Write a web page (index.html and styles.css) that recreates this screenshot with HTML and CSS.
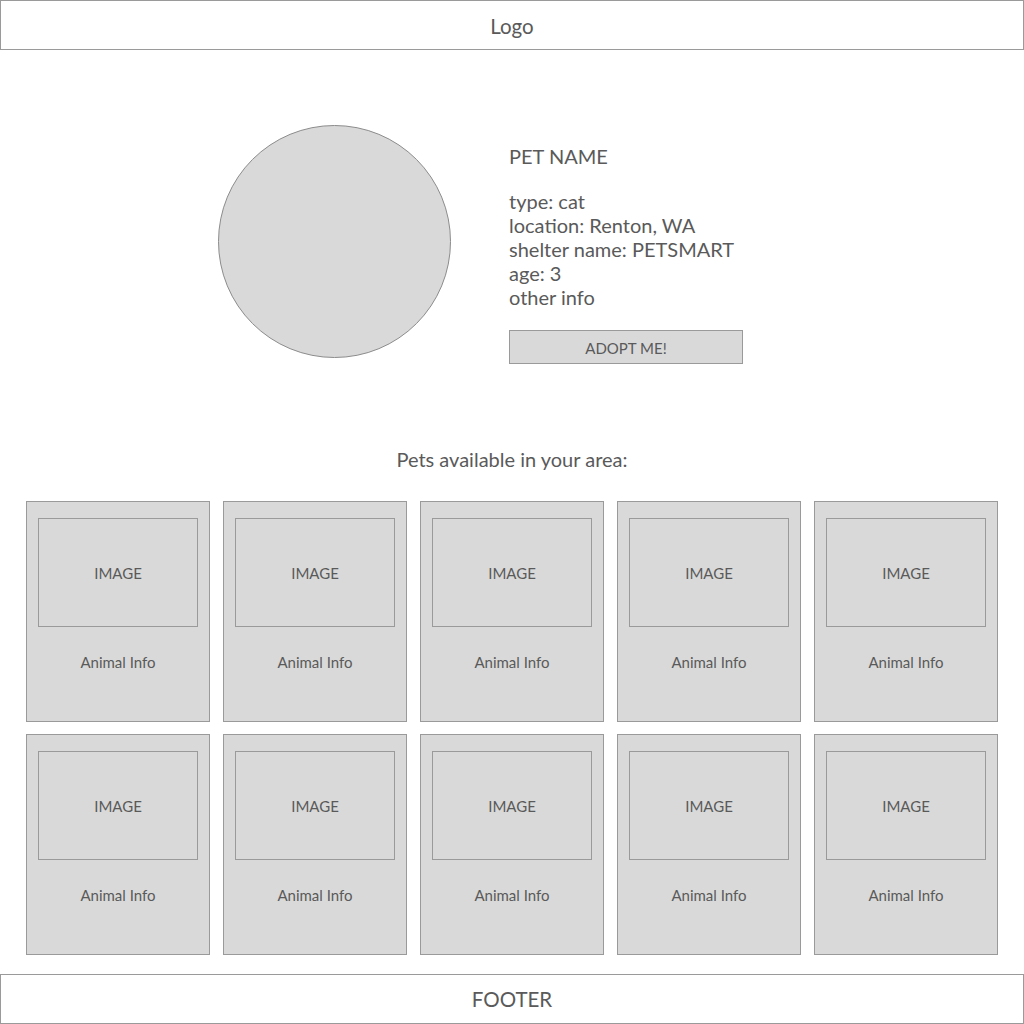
FILE: index.html
```html
<!DOCTYPE html>
<html lang="en">
<head>
    <meta charset="UTF-8">
    <meta name="viewport" content="width=device-width, initial-scale=1.0">
    <title>Pet Adoption</title>
    <link rel="stylesheet" href="styles.css">
</head>
<body>

    <!-- Header -->
    <header class="header">Logo</header>

    <!-- Pet utama -->
    <section class="hero">
        <div class="pet-photo"></div>
        <div class="pet-info">
            <div class="pet-name">PET NAME</div>
            <div class="pet-details">
                <div>type: cat</div>
                <div>location: Renton, WA</div>
                <div>shelter name: PETSMART</div>
                <div>age: 3</div>
                <div>other info</div>
            </div>
            <button class="adopt-btn">ADOPT ME!</button>
        </div>
    </section>

    <!-- Daftar pet -->
    <section class="nearby">
        <div class="nearby-title">Pets available in your area:</div>
        <div class="pet-grid">
            <div class="pet-card"><div class="card-image">IMAGE</div><div class="card-info">Animal Info</div></div>
            <div class="pet-card"><div class="card-image">IMAGE</div><div class="card-info">Animal Info</div></div>
            <div class="pet-card"><div class="card-image">IMAGE</div><div class="card-info">Animal Info</div></div>
            <div class="pet-card"><div class="card-image">IMAGE</div><div class="card-info">Animal Info</div></div>
            <div class="pet-card"><div class="card-image">IMAGE</div><div class="card-info">Animal Info</div></div>
            <div class="pet-card"><div class="card-image">IMAGE</div><div class="card-info">Animal Info</div></div>
            <div class="pet-card"><div class="card-image">IMAGE</div><div class="card-info">Animal Info</div></div>
            <div class="pet-card"><div class="card-image">IMAGE</div><div class="card-info">Animal Info</div></div>
            <div class="pet-card"><div class="card-image">IMAGE</div><div class="card-info">Animal Info</div></div>
            <div class="pet-card"><div class="card-image">IMAGE</div><div class="card-info">Animal Info</div></div>
        </div>
    </section>

    <!-- Footer -->
    <footer class="footer">FOOTER</footer>

</body>
</html>
```

FILE: styles.css
```css
* {
    box-sizing: border-box;
}

body {
    margin: 0;
    font-family: Lato, "Open Sans", sans-serif;
    color: #5a5a5a;
    background: #ffffff;
}

/* Header & footer */
.header,
.footer {
    height: 50px;
    border: 1px solid #9a9a9a;
    display: flex;
    align-items: center;
    justify-content: center;
    font-size: 20.5px;
}

.header {
    padding-top: 1px;
}

/* Pet utama */
.hero {
    display: flex;
    align-items: flex-start;
    gap: 58px;
    padding: 75px 0 0 218px;
}

.pet-photo {
    width: 233px;
    height: 233px;
    border-radius: 50%;
    background: #d9d9d9;
    border: 1px solid #8c8c8c;
}

.pet-info {
    padding-top: 19px;
    font-size: 20px;
    line-height: 24px;
}

.pet-name {
    margin-bottom: 21px;
}

.adopt-btn {
    display: block;
    width: 234px;
    height: 34px;
    margin-top: 21px;
    background: #d9d9d9;
    border: 1px solid #9a9a9a;
    font-family: inherit;
    font-size: 15px;
    color: #5a5a5a;
    padding: 2px 0 0;
}

/* Daftar pet */
.nearby {
    padding: 84px 26px 0;
}

.nearby-title {
    text-align: center;
    font-size: 20px;
    line-height: 22px;
    margin-bottom: 31px;
}

.pet-grid {
    display: grid;
    grid-template-columns: repeat(5, 184px);
    column-gap: 13px;
    row-gap: 12px;
    margin-bottom: 19px;
}

.pet-card {
    height: 221px;
    background: #d9d9d9;
    border: 1px solid #9a9a9a;
    padding: 16px 11px 0;
    font-size: 15px;
}

.card-image {
    height: 109px;
    border: 1px solid #9a9a9a;
    display: flex;
    align-items: center;
    justify-content: center;
}

.card-info {
    text-align: center;
    margin-top: 26px;
}
```
